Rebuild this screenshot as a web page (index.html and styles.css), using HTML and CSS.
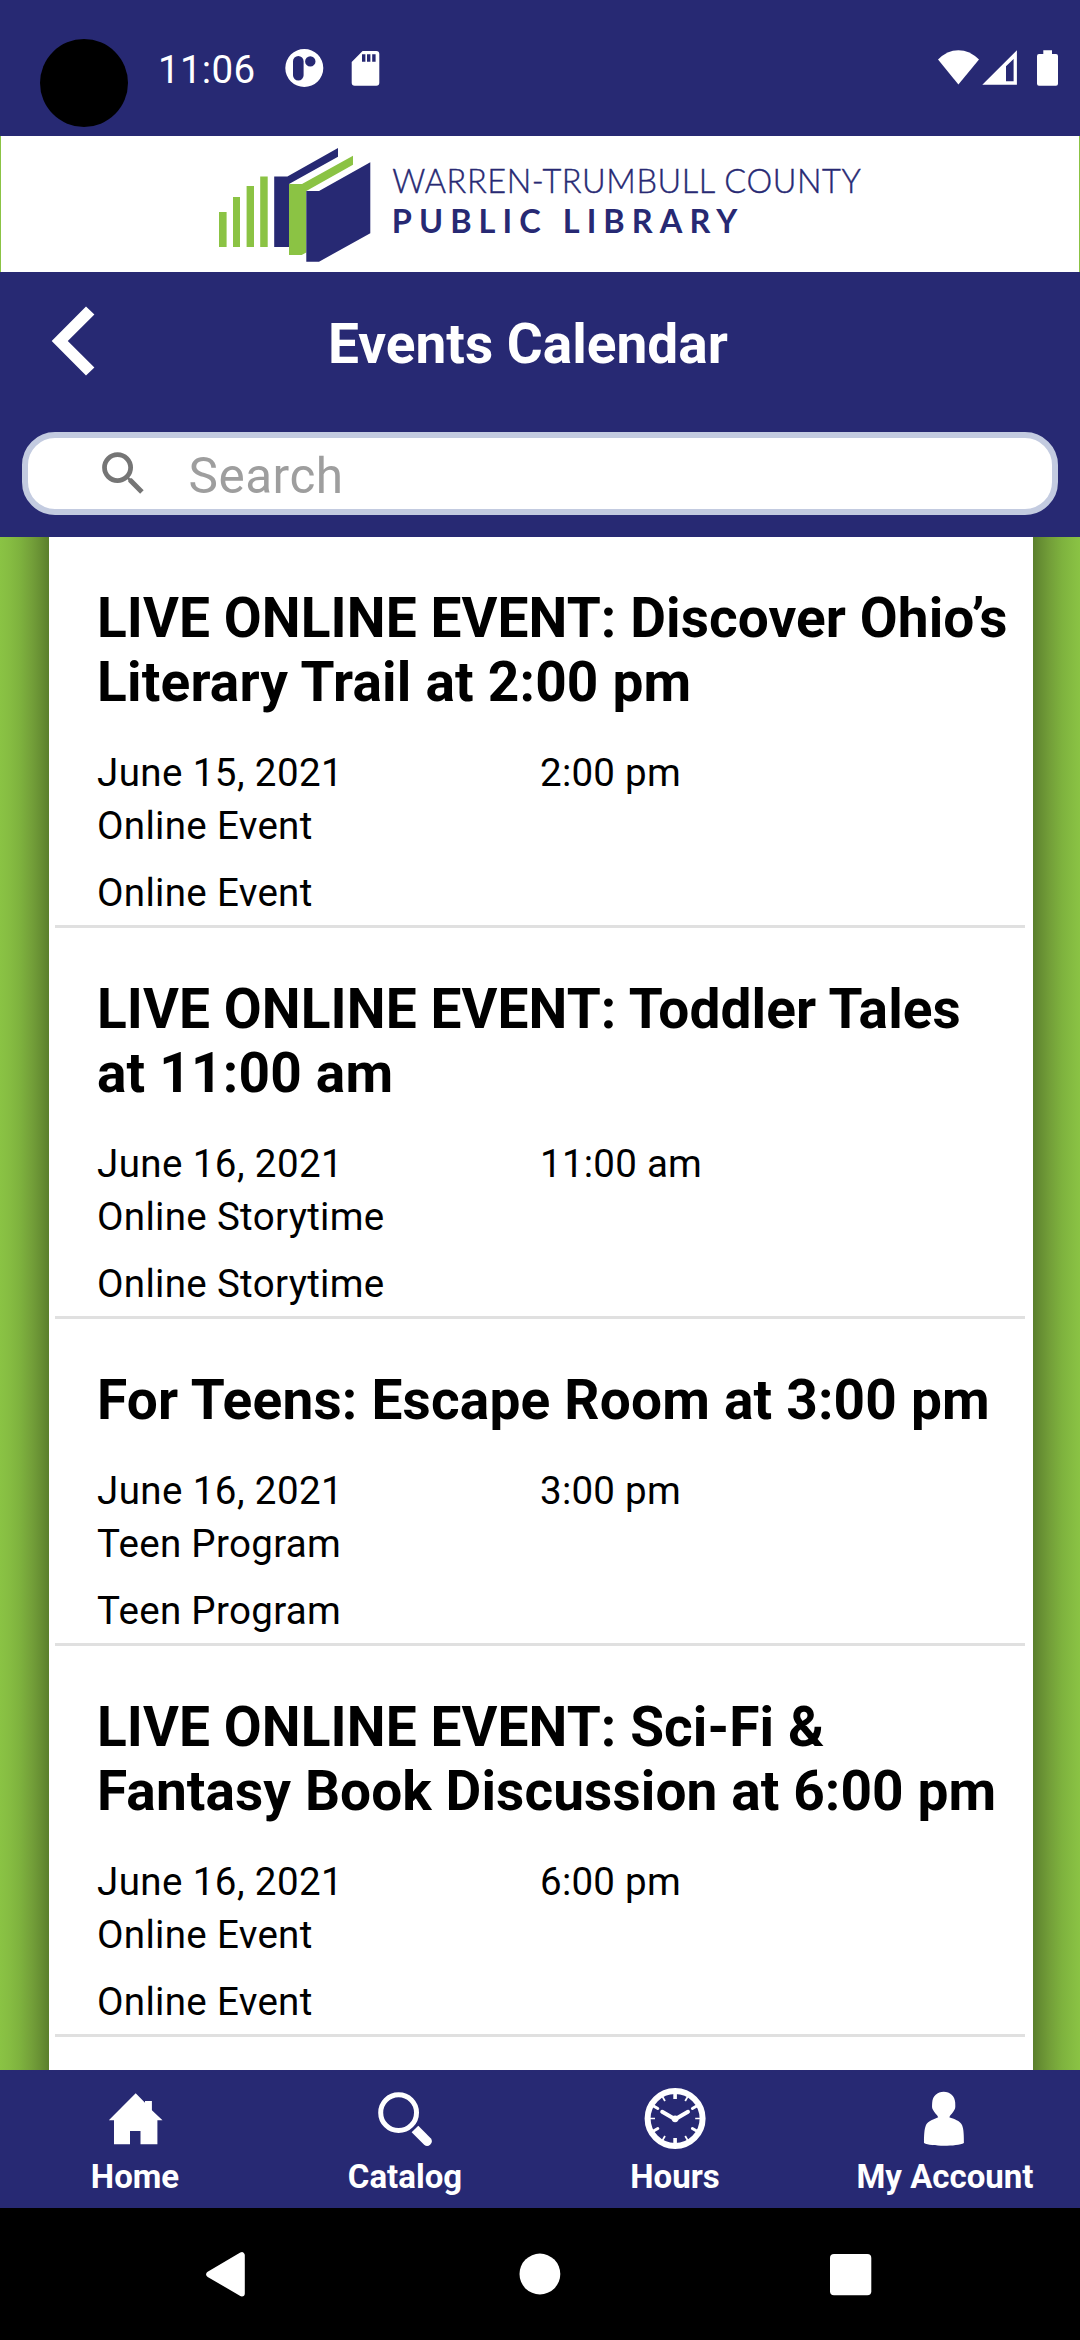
FILE: index.html
```html
<!DOCTYPE html>
<html lang="en">
<head>
<meta charset="utf-8">
<title>Events Calendar</title>
<link rel="stylesheet" href="styles.css">
</head>
<body>
<div class="screen">
  <div class="status">
    <div class="camera"></div>
    <div class="clock">11:06</div>
    <svg class="status-left" viewBox="280 40 110 56" width="110" height="56" fill="#fff">
      <path fill-rule="evenodd" d="M304.3 49a19 19 0 1 0 0 38a19 19 0 1 0 0-38zM298.3 56a5.3 5.3 0 0 1 5.3 5.3v14a5.3 5.3 0 0 1-10.6 0v-14a5.3 5.3 0 0 1 5.3-5.3zM310.3 56.2a5.2 5.2 0 1 1 0 10.4a5.2 5.2 0 1 1 0-10.4z"/>
      <path fill-rule="evenodd" d="M362.6 51h13.7a3 3 0 0 1 3 3v28.7a3 3 0 0 1-3 3h-21.6a3 3 0 0 1-3-3V62zM362 54.3v7.4h3.4v-7.4zM367 54.3v7.4h3.4v-7.4zM372.2 54.3v7.4h3.4v-7.4z"/>
    </svg>
    <svg class="status-right" viewBox="930 40 140 56" width="140" height="56" fill="#fff">
      <path d="M958.4 84.5L938 59.6Q947 50.2 958.4 50.2T979 59.6z"/>
      <path fill-rule="evenodd" d="M982.3 84.8L1016.9 50.2V84.8zM1006 66.2V81.3H1013.6V59z"/>
      <path d="M1043.3 50.3h8.7V54h4a2 2 0 0 1 2 2v27.7a2 2 0 0 1-2 2h-17a2 2 0 0 1-2-2V56a2 2 0 0 1 2-2h4.3z"/>
    </svg>
  </div>

  <div class="brand">
    <svg viewBox="200 136 680 136" width="680" height="136">
      <g fill="#8bc344">
        <path d="M219 212h7.6v35H219zM233 197h7v50h-7zM246.6 186h7.4v61h-7.4zM260.2 176.4h7.5V247h-7.5z"/>
        <path d="M289 184h13l51-28.3v9L306.3 191v61.5L301.7 255H289z"/>
      </g>
      <g fill="#272973">
        <path d="M274.2 176.4h13.2L338 148v8.7L289 184v63h-14.8z"/>
        <path d="M306.3 191H319l51.3-28.7v71L319 261.7h-12.7z"/>
        <text class="brand-top" x="392.3" y="192.7" textLength="468.5" lengthAdjust="spacing">WARREN-TRUMBULL COUNTY</text>
        <text class="brand-bottom" x="391.8" y="232.5" textLength="345.5" lengthAdjust="spacing">PUBLIC LIBRARY</text>
      </g>
    </svg>
  </div>

  <header class="header">
    <div class="title-row">
      <svg class="back" viewBox="48 300 50 82" width="50" height="82"><path fill="#fff" d="M51.7 341L86 306.6L94.4 314.4L67.8 341L94.4 367.6L86 375.4z"/></svg>
      <h1>Events Calendar</h1>
    </div>
    <div class="search">
      <svg viewBox="0 0 24 24" width="57" height="57"><path fill="#757575" d="M15.5 14h-.79l-.28-.27A6.471 6.471 0 0 0 16 9.5 6.5 6.5 0 1 0 9.5 16c1.61 0 3.09-.59 4.23-1.57l.27.28v.79l5 4.99L20.49 19l-4.99-5zm-6 0C7.01 14 5 11.99 5 9.5S7.01 5 9.5 5 14 7.01 14 9.5 11.99 14 9.5 14z"/></svg>
      <span>Search</span>
    </div>
  </header>

  <main class="content">
    <div class="edge edge-left"></div>
    <section class="list">
      <article class="event">
        <h2><span class="tight">LIVE ONLINE EVENT: Discover Ohio’s</span> Literary Trail at 2:00 pm</h2>
        <div class="when"><span>June 15, 2021</span><span class="time">2:00 pm</span></div>
        <p>Online Event</p>
        <p>Online Event</p>
      </article>
      <article class="event">
        <h2><span class="tight">LIVE ONLINE EVENT: Toddler Tales</span> at 11:00 am</h2>
        <div class="when"><span>June 16, 2021</span><span class="time">11:00 am</span></div>
        <p>Online Storytime</p>
        <p>Online Storytime</p>
      </article>
      <article class="event">
        <h2>For Teens: Escape Room at 3:00 pm</h2>
        <div class="when"><span>June 16, 2021</span><span class="time">3:00 pm</span></div>
        <p>Teen Program</p>
        <p>Teen Program</p>
      </article>
      <article class="event">
        <h2><span class="tight">LIVE ONLINE EVENT: Sci-Fi &amp; Fantasy Book Discussion at 6:00 pm</span></h2>
        <div class="when"><span>June 16, 2021</span><span class="time">6:00 pm</span></div>
        <p>Online Event</p>
        <p>Online Event</p>
      </article>
    </section>
    <div class="edge edge-right"></div>
  </main>

  <nav class="tabs">
    <div class="tab">
      <svg viewBox="0 0 72 72" width="72" height="72" fill="#fff"><path d="M36.7 11.3L46 20.8V19h6.9v9.2L63.5 38.3h-5.1v24H41.5V49H31v13.3H15v-24H9.8z"/></svg>
      <span>Home</span>
    </div>
    <div class="tab">
      <svg viewBox="0 0 72 72" width="72" height="72" fill="none" stroke="#fff"><circle cx="29.6" cy="30.7" r="17.9" stroke-width="5"/><path fill="#fff" stroke="none" d="M49.3 43.7L61.7 56.2a4.7 4.7 0 0 1-6.6 6.6L42.6 50.2z"/></svg>
      <span>Catalog</span>
    </div>
    <div class="tab">
      <svg viewBox="0 0 72 72" width="72" height="72" fill="none" stroke="#fff">
        <circle cx="36.1" cy="36.5" r="27.5" stroke-width="6"/>
        <path stroke-width="3.6" d="M36.1 11.5V17M36.1 56V61.5"/>
        <path stroke-width="1.5" d="M11 36.5h5M56.2 36.5h5"/>
        <path stroke-width="3" stroke-linecap="round" d="M14.5 24L18.8 26.5M57.7 24L53.4 26.5M14.5 49L18.8 46.5M57.7 49L53.4 46.5"/>
        <path stroke-width="1.8" d="M23.6 14.9L26 19M48.6 14.9L46.2 19M23.6 58.1L26 54M48.6 58.1L46.2 54"/>
        <path stroke-width="4" stroke-linecap="round" stroke-linejoin="round" d="M23.2 29.8L36.1 37.3L49 29.8"/>
        <circle cx="36.1" cy="36.8" r="3.4" fill="#fff" stroke="none"/>
      </svg>
      <span>Hours</span>
    </div>
    <div class="tab">
      <svg viewBox="0 0 72 72" width="72" height="72" fill="#fff"><path d="M34.7 9.8C41 9.8 45.8 14 46.2 20.5C46.3 24 46.6 26 45.6 27.5C44 31 41.5 32.5 40.3 35.2C45 37 51 38.5 53 43C54.8 47 54.9 54 54.9 61C48 64.7 22 64.7 15 61C15 54 15.2 47 17 43C19.2 38.8 25 37 29.2 35.2C28 32.5 25.4 31 23.8 27.5C22.8 26 23 24 23.2 20.5C23.6 14 28.4 9.8 34.7 9.8z"/></svg>
      <span>My Account</span>
    </div>
  </nav>

  <div class="system">
    <svg viewBox="0 0 60 60" width="60" height="60"><path fill="#fff" stroke="#fff" stroke-width="6" stroke-linejoin="round" d="M14.2 30.3L46.8 11.2V49.4z"/></svg>
    <svg viewBox="0 0 60 60" width="60" height="60"><circle cx="29.9" cy="30" r="20.4" fill="#fff"/></svg>
    <svg viewBox="0 0 60 60" width="60" height="60"><rect x="5" y="10" width="41.3" height="41.2" rx="4" fill="#fff"/></svg>
  </div>
</div>
</body>
</html>
```
FILE: styles.css
```css
* { box-sizing: border-box; margin: 0; padding: 0; }
svg { display: block; flex: none; }
body { font-family: Roboto, sans-serif; background: #000; }

.screen { width: 1080px; height: 2340px; display: flex; flex-direction: column; overflow: hidden; }

.status { height: 136px; flex: none; background: #272973; display: flex; align-items: flex-start; }
.camera { width: 88px; height: 88px; margin: 39px 0 0 40px; border-radius: 50%; background: #000; }
.clock { width: 122px; margin: 47px 0 0 30px; font-size: 38.5px; line-height: 45px; letter-spacing: 0.3px; color: #fff; }
.status-left { margin-top: 40px; }
.status-right { margin: 40px 10px 0 auto; }

.brand { height: 136px; flex: none; background: #fff; border: solid #8bc344; border-width: 0 1px; padding-left: 199px; }
.brand-top { font: 300 32.5px Lato, sans-serif; stroke: #272973; stroke-width: 0.4px; }
.brand-bottom { font: 700 32.5px Lato, sans-serif; }

.header { height: 265px; flex: none; background: #272973; padding: 28px 22px 0; }
.title-row { display: flex; height: 132px; padding-left: 26px; }
.title-row h1 { margin: 12px 0 0 230px; font-size: 55px; line-height: 64px; font-weight: 700; color: #fff; white-space: nowrap; }
.search { height: 83px; border: 6px solid #c3cbe0; border-radius: 33px; background: #fff; display: flex; align-items: flex-start; padding: 7px 0 0 67px; }
.search span { margin: 2px 0 0 36.5px; font-size: 49.5px; line-height: 58px; letter-spacing: 0.5px; color: #9e9e9e; }

.content { height: 1533px; flex: none; display: flex; overflow: hidden; background: #8bc344; }
.edge { flex: none; }
.edge-left { width: 49px; background: linear-gradient(to left, #5a7f2c 0, #678f33 8px, #739f39 17px, #7eb23e 29px, #86bd42 40px, #8ac344 49px); }
.edge-right { width: 47px; background: linear-gradient(to right, #5a7f2c 0, #678f33 8px, #739f39 17px, #7eb23e 29px, #86bd42 40px, #8ac344 47px); }
.list { width: 984px; padding: 0 8px 0 6px; background: #fff; color: #000; }
.event { border-bottom: 3px solid #e0e0e0; padding: 49px 12px 10px 42px; }
.event h2 { font-size: 55px; line-height: 64px; font-weight: 700; letter-spacing: 0.19px; margin-bottom: 36px; }
.event .tight { letter-spacing: 0.09px; }
.event p, .when { font-size: 38.5px; line-height: 45px; }
.event p { letter-spacing: 0.32px; }
.event p + p { margin-top: 22px; }
.when { display: grid; grid-template-columns: 443px 1fr; height: 53px; letter-spacing: 0.42px; }
.when .time { letter-spacing: 0.25px; }

.tabs { height: 138px; flex: none; background: #272973; display: grid; grid-template-columns: repeat(4, 270px); }
.tab { display: flex; flex-direction: column; align-items: center; padding-top: 12px; color: #fff; font-size: 33px; line-height: 39px; font-weight: 700; }
.tab span { margin-top: 3px; white-space: nowrap; }

.system { height: 132px; flex: none; background: #000; display: grid; grid-template-columns: repeat(3, 315px); justify-content: center; justify-items: center; padding-top: 36px; }
```
